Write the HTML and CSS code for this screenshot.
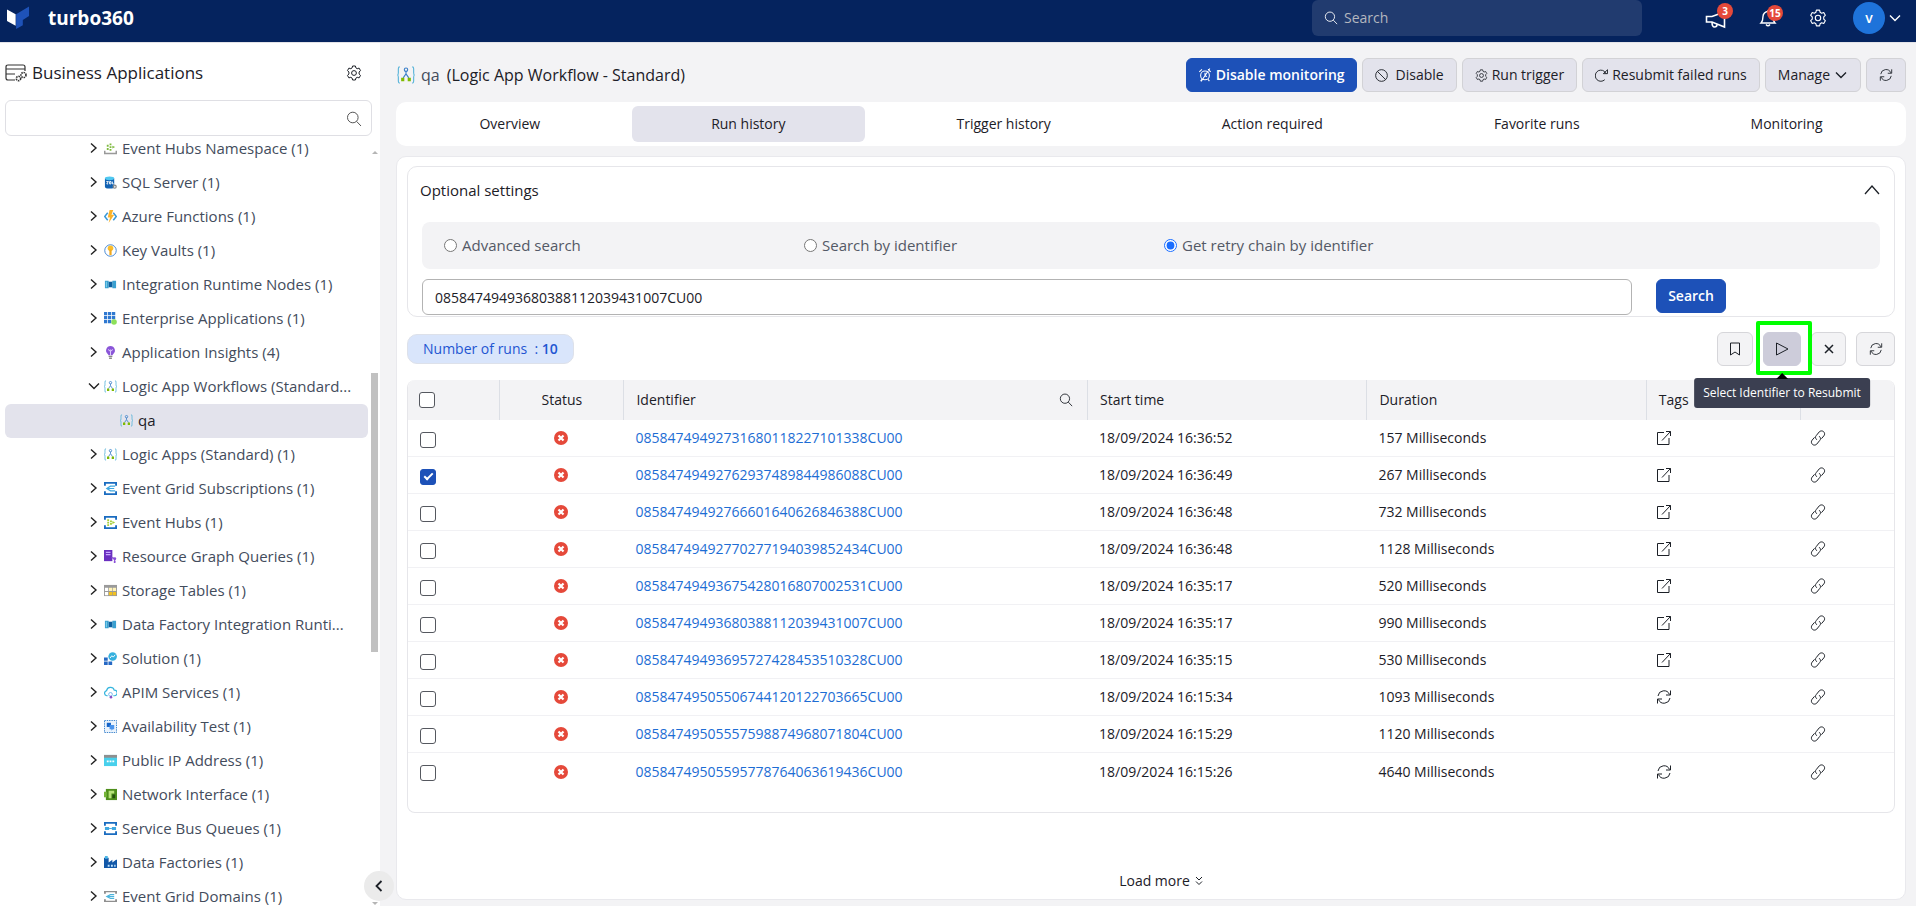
FILE: index.html
```html
<!DOCTYPE html>
<html lang="en">
<head>
<meta charset="utf-8">
<meta name="viewport" content="width=device-width, initial-scale=1">
<title>turbo360 - Run history</title>
<link rel="stylesheet" href="styles.css">
</head>
<body>
<svg class="sprite" aria-hidden="true">
  <symbol id="chev-right" viewBox="0 0 14 14"><path d="M4 2.5 9 7l-5 4.500" fill="none" stroke="currentColor" stroke-width="1.400"/></symbol>
  <symbol id="chev-down" viewBox="0 0 14 14"><path d="M2 4.500 7 9.500l5-5" fill="none" stroke="currentColor" stroke-width="1.400"/></symbol>
  <symbol id="gear" viewBox="0 0 16 16"><g fill="none" stroke="currentColor"><circle cx="8" cy="8" r="2.400"/><path d="M6.600 1h2.800l.5 1.900 1.300.8 1.900-.6 1.400 2.500-1.400 1.400v2l1.400 1.400-1.400 2.500-1.900-.6-1.300.8-.5 1.900H6.600l-.5-1.900-1.300-.8-1.900.6-1.400-2.500L2.900 9V7L1.500 5.600l1.400-2.500 1.900.6 1.300-.8z" stroke-linejoin="round"/></g></symbol>
  <symbol id="search" viewBox="0 0 16 16"><g fill="none" stroke="currentColor"><circle cx="6.800" cy="6.500" r="5.300"/><path d="M10.600 10.400 15 15"/></g></symbol>
  <symbol id="refresh" viewBox="0 0 16 16"><g fill="none" stroke="currentColor"><path d="M2 7a6 6 0 0 1 11.500-1.500M14 9a6 6 0 0 1-11.500 1.500"/><path d="M14.500 1.500V6H10M1.500 14.500V10H6"/></g></symbol>
  <symbol id="open" viewBox="0 0 16 16"><path d="M8 2.500H1.500v12H13V8M6 10.500 14.500 1.500M10 1.500h4.500V6" fill="none" stroke="currentColor" stroke-linejoin="round"/></symbol>
  <symbol id="link" viewBox="0 0 16 16"><g fill="none" stroke="currentColor" stroke-linecap="round"><path d="M6.500 9.500C5 8 5.300 6.500 6.300 5.500l3-3.700c1-1 2.900-1.300 4.200-.2 1.300 1.200 1.500 3 .4 4.200l-2.200 2.600"/><path d="M9.500 6.500c1.500 1.500 1.200 3 .2 4l-3 3.700c-1 1-2.900 1.300-4.200.2-1.300-1.200-1.500-3-.4-4.200l2.200-2.600"/></g></symbol>
  <symbol id="fail" viewBox="0 0 14 14"><circle cx="7" cy="7" r="7" fill="#e5493a"/><path d="m4.500 4.500 5 5m0-5-5 5" stroke="#fff" stroke-width="2.200"/></symbol>
  <symbol id="logic" viewBox="0 0 16 16"><g fill="none" stroke="#59b4d9"><path d="M2.500.8Q1.200.8 1.200 2.500v3.500Q1.200 8 .3 8q.9 0 .9 2v3.500q0 1.700 1.300 1.700M13.500.8q1.300 0 1.300 1.700v3.500q0 2 .9 2-.9 0-.9 2v3.500q0 1.700-1.300 1.700"/></g><path d="M8 4.500v2.500L5.500 10.500M8 7l2.500 3.500" stroke="#3a7fc8" fill="none"/><circle cx="8" cy="3.300" r="1.500" fill="none" stroke="#3a7fc8"/><path d="M3.700 10.500h2.800v3H3.700zM9.500 10.500h2.800v3H9.500z" fill="#7fba00"/></symbol>
  <symbol id="i-ehn" viewBox="0 0 14 14"><path d="M.8 9.500v3h12.400v-3" fill="none" stroke="#999" stroke-width="1.600"/><path d="M3 3h2v2H3zM3 6.500h2v2H3zM6 4.500h2v2H6zM6 1.500h2v2H6zM6 7.500h2v2H6zM9 4l3 1.500L9 7z" fill="#7fba3f"/></symbol>
  <symbol id="i-sql" viewBox="0 0 14 14"><path d="M1 2.500h10v9q0 2-5 2t-5-2z" fill="#1262b3"/><ellipse cx="6" cy="2.500" rx="5" ry="2" fill="#50c8f0"/><path d="M2.500 6h2.200L3 8.500h1.500M6 6h1.500v2.500H6zM9 6v2.500h1.500" stroke="#fff" fill="none"/><circle cx="11.500" cy="11.500" r="1.600" fill="none" stroke="#888" stroke-width="1.400"/></symbol>
  <symbol id="i-fn" viewBox="0 0 14 14"><path d="M4 3 .8 7 4 11M10 3l3.200 4L10 11" fill="none" stroke="#3999d8" stroke-width="1.600"/><path d="M6 0h4L8 5h3l-6 9 1.500-6H4z" fill="#fbb32b"/></symbol>
  <symbol id="i-key" viewBox="0 0 14 14"><circle cx="7" cy="7" r="6.200" fill="#fff" stroke="#3d82cf"/><circle cx="7" cy="4.500" r="3" fill="#fbbd2b"/><path d="M5.800 6h2.400v5L7 12.500 5.800 11z" fill="#f0a81e"/></symbol>
  <symbol id="i-node" viewBox="0 0 14 14"><path d="M1 3h4v8H1zM9 3h4v8H9z" fill="#3aa0d0"/><path d="M5 4h4v6H5z" fill="#0c5f9e"/><path d="M2 4h1v6H2z" fill="#8bd6f0"/></symbol>
  <symbol id="i-ent" viewBox="0 0 14 14"><path d="M0 0h3.500v3.500H0zM4.300 0h3.500v3.500H4.300zM8.600 0h3.500v3.500H8.600zM0 4.300h3.500v3.500H0zM4.300 4.300h3.500v3.500H4.300zM8.600 4.300h3.500v3.500H8.600zM0 8.600h3.500v3.500H0zM4.300 8.600h3.500v3.500H4.300z" fill="#2f78d0"/><circle cx="10.800" cy="10.700" r="3" fill="#8de05a"/></symbol>
  <symbol id="i-ins" viewBox="0 0 14 14"><path d="M7 0a4.800 4.800 0 0 1 3 8.500L9 10H5L4 8.500A4.800 4.800 0 0 1 7 0z" fill="#8a55d8"/><path d="M5 10.600h4v1.200H5zM5.500 12.500h3V14h-3z" fill="#888"/><path d="M4.800 3.500 6 5.500 7 4l1 1.500 1.200-2M7 5v5" stroke="#e4d4ff" fill="none"/></symbol>
  <symbol id="i-grid" viewBox="0 0 14 14"><path d="M0 0h14v4h-2V2H2v2H0zM0 14h14v-4h-2v2H2v-2H0z" fill="#1a6cc0"/><path d="M12 4.500H7L3 7l4 2.500h5M3 7h8" stroke="#3fa7e0" stroke-width="1.300" fill="none"/></symbol>
  <symbol id="i-hub" viewBox="0 0 14 14"><path d="M0 0h14v4h-2V2H2v2H0zM0 14h14v-4h-2v2H2v-2H0z" fill="#1a6cc0"/><path d="M3.500 3.500h2v2h-2zM3.500 6.200h2v2h-2zM3.500 8.900h2v2h-2zM6.500 4.800h2v2h-2zM6.500 7.500h2v2h-2zM9 5.500 12 7 9 8.500z" fill="#a6cf3a"/></symbol>
  <symbol id="i-graph" viewBox="0 0 14 14"><path d="M0 0h9v12H0z" fill="#6a2fc0"/><path d="M2 2.500h5M2 5h5" stroke="#c9a8ff" stroke-width="1.200"/><path d="m8 8 3.500 1.500L13 9m-1.500.5V13" stroke="#8a50d8" stroke-width="1.200"/><circle cx="11.500" cy="9.500" r="1.600" fill="#8a50d8"/><circle cx="11.500" cy="13" r="1.100" fill="#8a50d8"/></symbol>
  <symbol id="i-table" viewBox="0 0 14 14"><path d="M0 1h14v12H0z" fill="#9a9a9a"/><path d="M1 4h3.500v3.500H1zM1 8.500h3.500V12H1z" fill="#fff"/><path d="M5.300 4H9v3.500H5.300zM9.700 4H13v3.500H9.700z" fill="#fff3b8"/><path d="M5.300 8.500H9V12H5.300zM9.700 8.500H13V12H9.700z" fill="#f2c01e"/></symbol>
  <symbol id="i-sol" viewBox="0 0 14 14"><circle cx="9.300" cy="4.800" r="4.600" fill="#35b0de"/><path d="M6.500 6.500 8.500 4l1.500 1.500L12 3" stroke="#fff" fill="none"/><path d="M0 6h4v3.500H0zM0 10.300h4V14H0zM4.800 10.300h4V14h-4z" fill="#2769c4"/></symbol>
  <symbol id="i-api" viewBox="0 0 14 14"><path d="M4 10.500H3A2.800 2.800 0 0 1 2.800 5 4.200 4.200 0 0 1 11 4.500a3 3 0 0 1 .3 6H10" fill="none" stroke="#35b5de" stroke-width="1.300"/><circle cx="7" cy="9" r="2" fill="none" stroke="#6db6ee"/><circle cx="7.500" cy="12" r="1.400" fill="#8a50c8"/></symbol>
  <symbol id="i-avail" viewBox="0 0 14 14"><path d="M.5.500h13v13H.5z" fill="#eaf3fc" stroke="#2a78c8" stroke-dasharray="1.500 1"/><path d="M3 3h4.500v4.500H3z" fill="#1464c8"/><path d="M6 5.500h5V10H9.500L8 11.500V10H6z" fill="#4a94ec"/></symbol>
  <symbol id="i-ip" viewBox="0 0 14 14"><path d="M0 1h14v12H0z" fill="#48d0ec"/><path d="M0 1h14v3H0z" fill="#8f8f8f"/><path d="M3 8h2M6 8h2M9 8h2" stroke="#fff" stroke-width="2"/></symbol>
  <symbol id="i-nic" viewBox="0 0 14 14"><path d="M2 1h12v12H2z" fill="#4f8f1c"/><path d="M0 4h3v6H0z" fill="#76b53a"/><path d="M5 3h6v3H8v5H5z" fill="#b7e27a"/><path d="M9 7h3v4H9z" fill="#24500c"/></symbol>
  <symbol id="i-bus" viewBox="0 0 14 14"><path d="M0 0h14v4h-2V2H2v2H0zM0 14h14v-4h-2v2H2v-2H0z" fill="#1a6cc0"/><path d="M1 5.500h4.500v3H1zM8.500 5.500H13v3H8.500z" fill="#3fa7e0"/><path d="M5.500 7h3" stroke="#3fa7e0"/></symbol>
  <symbol id="i-fac" viewBox="0 0 14 14"><path d="M0 2h5v5l4-3v3l4-3h1v9H0z" fill="#1258a8"/><path d="M1 0h3v3H1z" fill="#49b6e6"/><path d="M4 9.500h2v2H4zM7.500 9.500h2v2h-2zM11 9.500h1.500v2H11z" fill="#bfe4ff"/></symbol>
  <symbol id="i-dom" viewBox="0 0 14 14"><path d="M0 1h14v3h-2V2.500H2V4H0zM0 13h14v-3h-2v1.500H2V10H0z" fill="#8f8f8f"/><path d="M11 5H7L3 7l4 2h4M3 7h8" stroke="#4cb4dc" stroke-width="1.200" fill="none"/></symbol>
</svg>

<header class="topbar">
  <a class="brand" href="#">
    <svg class="brand-mark" viewBox="0 0 24 24"><path d="M0 3 9 8v12L0 15z" fill="#fff"/><path d="M9.500 8 23 0v10l-6.500 4v5.500l-7 4z" fill="#1e52b8"/></svg>
    <span>turbo360</span>
  </a>
  <label class="global-search"><svg class="ic14"><use href="#search"/></svg><input type="search" placeholder="Search" aria-label="Search"></label>
  <nav class="top-actions">
    <button class="top-btn" aria-label="Announcements"><svg class="ic22" viewBox="0 0 22 22" fill="none" stroke="currentColor" stroke-width="1.600"><path d="M1.500 9.500H7L19.500 5v15L7 15H1.500zM7 15q0 5 2.500 5t2.500-2.500"/></svg><span class="badge">3</span></button>
    <button class="top-btn" aria-label="Notifications"><svg class="ic18" viewBox="0 0 18 18" fill="none" stroke="currentColor" stroke-width="1.400"><path d="M2 14Q4 12 4 7.500a5 5 0 0 1 10 0Q14 12 16 14zM9 1v1.500M7 15.500q2 2.500 4 0"/></svg><span class="badge">15</span></button>
    <button class="top-btn" aria-label="Settings"><svg class="ic18"><use href="#gear"/></svg></button>
    <button class="account" aria-label="Account"><span class="avatar">v</span><svg class="ic14"><use href="#chev-down"/></svg></button>
  </nav>
</header>

<div class="shell">
  <aside class="sidebar">
    <div class="side-head">
      <svg class="side-logo" viewBox="0 0 22 18" fill="none" stroke="#333" stroke-width="1.200"><path d="M10 16H3q-2 0-2-2V3q0-2 2-2h15q2 0 2 2v4M1 5h19M1 10h9"/><circle cx="13.500" cy="14.500" r="2.200" stroke-dasharray="1.500 .8" stroke-width="1.600"/><circle cx="18.500" cy="11" r="2.500" stroke-dasharray="1.500 .8" stroke-width="1.600"/></svg>
      <h1>Business Applications</h1>
      <button class="plain" aria-label="Sidebar settings"><svg class="ic16"><use href="#gear"/></svg></button>
    </div>
    <label class="side-search"><input type="text" aria-label="Filter applications"><svg class="ic16"><use href="#search"/></svg></label>
    <div class="tree-wrap">
      <ul class="tree">
        <li><svg class="ic14"><use href="#chev-right"/></svg><svg class="ic13"><use href="#i-ehn"/></svg>Event Hubs Namespace (1)</li>
        <li><svg class="ic14"><use href="#chev-right"/></svg><svg class="ic13"><use href="#i-sql"/></svg>SQL Server (1)</li>
        <li><svg class="ic14"><use href="#chev-right"/></svg><svg class="ic13"><use href="#i-fn"/></svg>Azure Functions (1)</li>
        <li><svg class="ic14"><use href="#chev-right"/></svg><svg class="ic13"><use href="#i-key"/></svg>Key Vaults (1)</li>
        <li><svg class="ic14"><use href="#chev-right"/></svg><svg class="ic13"><use href="#i-node"/></svg>Integration Runtime Nodes (1)</li>
        <li><svg class="ic14"><use href="#chev-right"/></svg><svg class="ic13"><use href="#i-ent"/></svg>Enterprise Applications (1)</li>
        <li><svg class="ic14"><use href="#chev-right"/></svg><svg class="ic13"><use href="#i-ins"/></svg>Application Insights (4)</li>
        <li><svg class="ic14"><use href="#chev-down"/></svg><svg class="ic13"><use href="#logic"/></svg>Logic App Workflows (Standard...</li>
        <li class="leaf"><svg class="ic13"><use href="#logic"/></svg>qa</li>
        <li><svg class="ic14"><use href="#chev-right"/></svg><svg class="ic13"><use href="#logic"/></svg>Logic Apps (Standard) (1)</li>
        <li><svg class="ic14"><use href="#chev-right"/></svg><svg class="ic13"><use href="#i-grid"/></svg>Event Grid Subscriptions (1)</li>
        <li><svg class="ic14"><use href="#chev-right"/></svg><svg class="ic13"><use href="#i-hub"/></svg>Event Hubs (1)</li>
        <li><svg class="ic14"><use href="#chev-right"/></svg><svg class="ic13"><use href="#i-graph"/></svg>Resource Graph Queries (1)</li>
        <li><svg class="ic14"><use href="#chev-right"/></svg><svg class="ic13"><use href="#i-table"/></svg>Storage Tables (1)</li>
        <li><svg class="ic14"><use href="#chev-right"/></svg><svg class="ic13"><use href="#i-node"/></svg>Data Factory Integration Runti...</li>
        <li><svg class="ic14"><use href="#chev-right"/></svg><svg class="ic13"><use href="#i-sol"/></svg>Solution (1)</li>
        <li><svg class="ic14"><use href="#chev-right"/></svg><svg class="ic13"><use href="#i-api"/></svg>APIM Services (1)</li>
        <li><svg class="ic14"><use href="#chev-right"/></svg><svg class="ic13"><use href="#i-avail"/></svg>Availability Test (1)</li>
        <li><svg class="ic14"><use href="#chev-right"/></svg><svg class="ic13"><use href="#i-ip"/></svg>Public IP Address (1)</li>
        <li><svg class="ic14"><use href="#chev-right"/></svg><svg class="ic13"><use href="#i-nic"/></svg>Network Interface (1)</li>
        <li><svg class="ic14"><use href="#chev-right"/></svg><svg class="ic13"><use href="#i-bus"/></svg>Service Bus Queues (1)</li>
        <li><svg class="ic14"><use href="#chev-right"/></svg><svg class="ic13"><use href="#i-fac"/></svg>Data Factories (1)</li>
        <li><svg class="ic14"><use href="#chev-right"/></svg><svg class="ic13"><use href="#i-dom"/></svg>Event Grid Domains (1)</li>
      </ul>
      <div class="scrollbar" aria-hidden="true"><i class="arrow-up"></i><i class="thumb"></i><i class="arrow-down"></i></div>
    </div>
    <button class="collapse" aria-label="Collapse sidebar"><svg class="ic14" viewBox="0 0 14 14"><path d="M9.500 2 4.500 7l5 5" fill="none" stroke="currentColor" stroke-width="1.800"/></svg></button>
  </aside>

  <main class="main">
    <div class="title-row">
      <svg class="title-icon"><use href="#logic"/></svg>
      <span class="res-name">qa</span>
      <h2>(Logic App Workflow - Standard)</h2>
      <div class="actions">
        <button class="btn primary"><svg class="ic14" viewBox="0 0 16 16" fill="none" stroke="currentColor" stroke-width="1.200"><circle cx="8" cy="8.500" r="5"/><path d="M8 5.500v3l2 1.500M1.500 4.500l3-3M11.500 1.500l3 3M4.500 13 3 15M11.500 13l1.500 2M3.500 15.500 13.500.5"/></svg>Disable monitoring</button>
        <button class="btn wide"><svg class="ic13" viewBox="0 0 14 14" fill="none" stroke="currentColor"><circle cx="7" cy="7" r="6.300"/><path d="m2.500 2.500 9 9"/></svg>Disable</button>
        <button class="btn"><svg class="ic13"><use href="#gear"/></svg>Run trigger</button>
        <button class="btn"><svg class="ic13" viewBox="0 0 14 14" fill="none" stroke="currentColor"><path d="M10.500 11.500A6 6 0 1 1 10 2.500L12 5M13.500.8V5H9z"/></svg>Resubmit failed runs</button>
        <button class="btn">Manage<svg class="ic14"><use href="#chev-down"/></svg></button>
        <button class="btn" aria-label="Refresh"><svg class="ic14"><use href="#refresh"/></svg></button>
      </div>
    </div>

    <nav class="tabs">
      <a href="#">Overview</a><a href="#" class="active">Run history</a><a href="#">Trigger history</a><a href="#">Action required</a><a href="#">Favorite runs</a><a href="#">Monitoring</a>
    </nav>

    <section class="panel">
      <section class="card">
        <div class="card-head"><h3>Optional settings</h3><button class="plain" aria-label="Collapse settings"><svg class="ic16" viewBox="0 0 16 16"><path d="M1 12l7-8 7 8" fill="none" stroke="currentColor" stroke-width="1.300"/></svg></button></div>
        <div class="modes">
          <label><input type="radio" name="mode">Advanced search</label>
          <label><input type="radio" name="mode">Search by identifier</label>
          <label><input type="radio" name="mode" checked>Get retry chain by identifier</label>
        </div>
        <div class="query"><input type="text" value="08584749493680388112039431007CU00" aria-label="Identifier"><button class="btn primary">Search</button></div>
      </section>

      <div class="toolbar">
        <span class="chip">Number of runs &nbsp;: <b>10</b></span>
        <div class="tools">
          <button class="tool" aria-label="Bookmark"><svg class="ic14" viewBox="0 0 14 14"><path d="M2.500 1h9v12L7 10l-4.500 3z" fill="none" stroke="currentColor"/></svg></button>
          <span class="focus-tool">
            <button class="tool pressed" aria-label="Resubmit" aria-describedby="resubmit-tip"><svg class="ic14" viewBox="0 0 14 14"><path d="M1.500 1v12L13 7z" fill="none" stroke="currentColor" stroke-linejoin="round"/></svg></button>
            <span class="highlight"></span>
            <span class="tooltip" role="tooltip" id="resubmit-tip">Select Identifier to Resubmit</span>
          </span>
          <button class="tool slim" aria-label="Clear selection"><svg class="ic14" viewBox="0 0 14 14"><path d="m3 3 8 8m0-8-8 8" stroke="currentColor" stroke-width="1.500"/></svg></button>
          <button class="tool last" aria-label="Refresh runs"><svg class="ic14"><use href="#refresh"/></svg></button>
        </div>
      </div>

      <div class="table-wrap">
        <table>
          <colgroup><col class="c-check"><col class="c-status"><col class="c-id"><col class="c-start"><col class="c-dur"><col class="c-tags"><col></colgroup>
          <thead><tr><th><input type="checkbox" aria-label="Select all"></th><th class="mid">Status</th><th><div class="id-head">Identifier<svg class="ic14"><use href="#search"/></svg></div></th><th>Start time</th><th>Duration</th><th>Tags</th><th></th></tr></thead>
          <tbody>
            <tr><td><input type="checkbox" aria-label="Select run"></td><td class="mid"><svg class="ic14"><use href="#fail"/></svg></td><td><a href="#">08584749492731680118227101338CU00</a></td><td>18/09/2024 16:36:52</td><td>157 Milliseconds</td><td class="act"><svg class="ic16"><use href="#open"/></svg></td><td class="act"><svg class="ic16"><use href="#link"/></svg></td></tr>
            <tr><td><input type="checkbox" aria-label="Select run" checked></td><td class="mid"><svg class="ic14"><use href="#fail"/></svg></td><td><a href="#">08584749492762937489844986088CU00</a></td><td>18/09/2024 16:36:49</td><td>267 Milliseconds</td><td class="act"><svg class="ic16"><use href="#open"/></svg></td><td class="act"><svg class="ic16"><use href="#link"/></svg></td></tr>
            <tr><td><input type="checkbox" aria-label="Select run"></td><td class="mid"><svg class="ic14"><use href="#fail"/></svg></td><td><a href="#">08584749492766601640626846388CU00</a></td><td>18/09/2024 16:36:48</td><td>732 Milliseconds</td><td class="act"><svg class="ic16"><use href="#open"/></svg></td><td class="act"><svg class="ic16"><use href="#link"/></svg></td></tr>
            <tr><td><input type="checkbox" aria-label="Select run"></td><td class="mid"><svg class="ic14"><use href="#fail"/></svg></td><td><a href="#">08584749492770277194039852434CU00</a></td><td>18/09/2024 16:36:48</td><td>1128 Milliseconds</td><td class="act"><svg class="ic16"><use href="#open"/></svg></td><td class="act"><svg class="ic16"><use href="#link"/></svg></td></tr>
            <tr><td><input type="checkbox" aria-label="Select run"></td><td class="mid"><svg class="ic14"><use href="#fail"/></svg></td><td><a href="#">08584749493675428016807002531CU00</a></td><td>18/09/2024 16:35:17</td><td>520 Milliseconds</td><td class="act"><svg class="ic16"><use href="#open"/></svg></td><td class="act"><svg class="ic16"><use href="#link"/></svg></td></tr>
            <tr><td><input type="checkbox" aria-label="Select run"></td><td class="mid"><svg class="ic14"><use href="#fail"/></svg></td><td><a href="#">08584749493680388112039431007CU00</a></td><td>18/09/2024 16:35:17</td><td>990 Milliseconds</td><td class="act"><svg class="ic16"><use href="#open"/></svg></td><td class="act"><svg class="ic16"><use href="#link"/></svg></td></tr>
            <tr><td><input type="checkbox" aria-label="Select run"></td><td class="mid"><svg class="ic14"><use href="#fail"/></svg></td><td><a href="#">08584749493695727428453510328CU00</a></td><td>18/09/2024 16:35:15</td><td>530 Milliseconds</td><td class="act"><svg class="ic16"><use href="#open"/></svg></td><td class="act"><svg class="ic16"><use href="#link"/></svg></td></tr>
            <tr><td><input type="checkbox" aria-label="Select run"></td><td class="mid"><svg class="ic14"><use href="#fail"/></svg></td><td><a href="#">08584749505506744120122703665CU00</a></td><td>18/09/2024 16:15:34</td><td>1093 Milliseconds</td><td class="act"><svg class="ic16"><use href="#refresh"/></svg></td><td class="act"><svg class="ic16"><use href="#link"/></svg></td></tr>
            <tr><td><input type="checkbox" aria-label="Select run"></td><td class="mid"><svg class="ic14"><use href="#fail"/></svg></td><td><a href="#">08584749505557598874968071804CU00</a></td><td>18/09/2024 16:15:29</td><td>1120 Milliseconds</td><td></td><td class="act"><svg class="ic16"><use href="#link"/></svg></td></tr>
            <tr><td><input type="checkbox" aria-label="Select run"></td><td class="mid"><svg class="ic14"><use href="#fail"/></svg></td><td><a href="#">08584749505595778764063619436CU00</a></td><td>18/09/2024 16:15:26</td><td>4640 Milliseconds</td><td class="act"><svg class="ic16"><use href="#refresh"/></svg></td><td class="act"><svg class="ic16"><use href="#link"/></svg></td></tr>
          </tbody>
        </table>
      </div>

      <button class="load-more">Load more<svg class="ic8" viewBox="0 0 8 10"><path d="m1 1 3 3 3-3M1 5.500l3 3 3-3" fill="none" stroke="currentColor"/></svg></button>
    </section>
  </main>
</div>
</body>
</html>
```
FILE: styles.css
```css
*, *::before, *::after { box-sizing: border-box; }

body {
  margin: 0;
  height: 100vh;
  display: flex;
  flex-direction: column;
  overflow: hidden;
  font: 14px/20px "Open Sans", sans-serif;
  color: #1c2027;
  background: #f3f3f5;
}

h1, h2, h3, ul { margin: 0; padding: 0; font-weight: 400; }
button, input { font: inherit; color: inherit; margin: 0; }
button { cursor: pointer; }
a { color: inherit; text-decoration: none; }
svg { display: block; flex: none; }

.sprite { position: absolute; width: 0; height: 0; }
.ic8 { width: 8px; height: 10px; }
.ic13 { width: 13px; height: 13px; }
.ic14 { width: 14px; height: 14px; }
.ic16 { width: 16px; height: 16px; }
.ic18 { width: 18px; height: 18px; }
.ic22 { width: 22px; height: 22px; }
.plain { padding: 0; border: 0; background: none; }

/* Top bar */
.topbar {
  flex: none;
  height: 42px;
  padding: 0 14px 6px 7px;
  display: flex;
  align-items: center;
  color: #fff;
  background: #05235e;
}
.brand { display: flex; align-items: center; gap: 18px; font-size: 19px; font-weight: 700; }
.brand-mark { width: 23px; height: 24px; }
.global-search {
  margin-left: auto;
  width: 330px;
  height: 36px;
  padding: 0 12px;
  display: flex;
  align-items: center;
  gap: 6px;
  border-radius: 6px;
  background: #213b6f;
}
.global-search input { flex: 1; min-width: 0; padding: 0; border: 0; outline: 0; background: none; }
.global-search input::placeholder { color: #b4b7bf; opacity: 1; }
.top-actions { margin-left: 63px; display: flex; align-items: center; }
.top-btn { position: relative; padding: 0; border: 0; background: none; margin-right: 32px; }
.top-btn:nth-child(3) { margin-right: 26px; }
.badge {
  position: absolute;
  top: -4px;
  right: -6px;
  min-width: 16px;
  height: 16px;
  padding: 0 2px;
  border-radius: 8px;
  font-size: 10px;
  line-height: 16px;
  font-weight: 700;
  background: #e5493a;
}
.account { display: flex; align-items: center; gap: 3px; padding: 0; border: 0; background: none; }
.avatar { width: 32px; height: 32px; border-radius: 50%; line-height: 32px; font-weight: 600; background: #1e73da; }

.shell { flex: 1; min-height: 0; display: flex; border-top: 1px solid #e3e3e8; }

/* Sidebar */
.sidebar {
  position: relative;
  flex: none;
  width: 380px;
  padding: 15px 2px 0 5px;
  display: flex;
  flex-direction: column;
  background: #fff;
}
.side-head { height: 30px; display: flex; align-items: center; gap: 5px; padding-right: 16px; }
.side-head h1 { flex: 1; font-size: 17px; }
.side-logo { width: 22px; height: 18px; }
.side-search {
  flex: none;
  height: 36px;
  margin: 12px 6px 2px 0;
  padding: 2px 9px 0 10px;
  display: flex;
  align-items: center;
  border: 1px solid #dfdfe4;
  border-radius: 6px;
  color: #555;
}
.side-search input { flex: 1; min-width: 0; border: 0; outline: 0; background: none; }
.tree-wrap { flex: 1; min-height: 0; display: flex; overflow: hidden; }
.tree { flex: 1; margin-top: -6px; list-style: none; font-size: 15px; color: #434c5c; }
.tree li { height: 34px; padding: 0 0 2px 82px; display: flex; align-items: center; white-space: nowrap; border-radius: 6px; }
.tree .ic14 { margin-right: 3px; color: #222; }
.tree .ic13 { margin-right: 5px; }
.tree .leaf { padding-left: 115px; color: #1c2027; background: #e3e3ec; }
.scrollbar { width: 7px; margin: 13px 0 0 3px; display: flex; flex-direction: column; align-items: center; }
.arrow-up { border: 3px solid transparent; border-top: 0; border-bottom-color: #b5b5b5; }
.arrow-down { margin: auto 0 1px; border: 3px solid transparent; border-bottom: 0; border-top-color: #b5b5b5; }
.thumb { width: 7px; height: 37%; margin-top: 219px; background: #c1c1c1; }
.collapse {
  position: absolute;
  right: -14px;
  bottom: 5px;
  width: 30px;
  height: 30px;
  padding: 8px;
  border: 0;
  border-radius: 50%;
  background: #ebebeb;
}

/* Main area */
.main { flex: 1; min-width: 0; padding: 15px 10px 6px 16px; display: flex; flex-direction: column; gap: 10px; }
.title-row { display: flex; align-items: center; }
.title-icon { width: 20px; height: 18px; }
.res-name { margin: 0 7px 0 5px; font-size: 16px; color: #434c5c; }
.title-row h2 { font-size: 16px; }
.actions { margin-left: auto; display: flex; gap: 5px; }
.btn {
  height: 34px;
  padding: 0 12px;
  display: flex;
  align-items: center;
  gap: 4px;
  white-space: nowrap;
  border: 1px solid #d2d2d6;
  border-radius: 6px;
  background: #e3e3ec;
}
.btn.wide { gap: 8px; }
.btn.primary { padding: 0 11px; font-weight: 600; color: #fff; border-color: #1d51b8; background: #1d51b8; }

.tabs { display: flex; gap: 12px; padding: 4px; border-radius: 10px; background: #fff; }
.tabs a { flex: 1 1 auto; height: 36px; line-height: 36px; text-align: center; border-radius: 6px; }
.tabs .active { background: #e3e3ec; }

.panel {
  flex: 1;
  min-height: 0;
  padding: 9px 10px 8px;
  display: flex;
  flex-direction: column;
  border: 1px solid #e9e9ed;
  border-radius: 10px;
  background: #fff;
}
.card { padding: 0 14px 1px; border: 1px solid #e6e6ea; border-radius: 10px; }
.card-head { height: 46px; display: flex; align-items: center; justify-content: space-between; }
.card-head h3 { font-size: 15px; margin-left: -2px; }
.modes { display: flex; margin-top: 9px; padding: 0 22px; border-radius: 8px; font-size: 15px; line-height: 47px; color: #535966; background: #f3f3f5; }
.modes label { width: 360px; display: flex; align-items: center; gap: 5px; }
.modes input { width: 13px; height: 13px; accent-color: #1a6dff; }
.query { display: flex; gap: 24px; margin-top: 10px; }
.query input { width: 83%; height: 36px; padding: 0 12px; border: 1px solid #b3b3b3; border-radius: 6px; outline: 0; }

.toolbar { display: flex; align-items: center; justify-content: space-between; margin: 15px 0 14px; }
.chip { padding: 4px 15px; border: 1px solid #dde1ea; border-radius: 10px; color: #1f56d2; background: #d9e5fb; }
.chip b { font-weight: 600; }
.tools { display: flex; gap: 10px; }
.tool {
  width: 36px;
  height: 34px;
  padding: 0;
  display: flex;
  align-items: center;
  justify-content: center;
  border: 1px solid #d6d6da;
  border-radius: 6px;
  background: #f3f3f5;
}
.tool.pressed { width: 38px; border-color: #cdccda; background: #cdccda; }
.tool.slim { width: 35px; }
.tool.last { width: 39px; }
.focus-tool { position: relative; }
.highlight { position: absolute; inset: -11px -11px -9px -7px; border: 4px solid #00ff00; border-radius: 2px; pointer-events: none; }
.tooltip {
  position: absolute;
  z-index: 2;
  top: 46px;
  left: 50%;
  transform: translateX(-50%);
  padding: 5px 9px;
  white-space: nowrap;
  font-size: 12px;
  color: #fff;
  border-radius: 3px;
  background: #3b3f51;
}
.tooltip::before {
  content: "";
  position: absolute;
  top: -5px;
  left: 50%;
  margin-left: -6px;
  border: 6px solid transparent;
  border-top: 0;
  border-bottom-color: #000;
}

/* Runs table */
.table-wrap { padding-bottom: 22px; border: 1px solid #e6e6ea; border-top: 0; border-radius: 8px; overflow: hidden; }
table { width: 100%; table-layout: fixed; border-collapse: separate; border-spacing: 0; }
.c-check { width: 6.150%; }
.c-status { width: 8.350%; }
.c-id { width: 31.200%; }
.c-start { width: 18.800%; }
.c-dur { width: 18.800%; }
.c-tags { width: 10.400%; }
th { height: 40px; padding: 0 12px; text-align: left; font-weight: 400; background: #f3f3f5; }
th + th { border-left: 1px solid #dcdfe5; }
td { height: 37px; padding: 0 12px; border-bottom: 1px solid #f1f1f4; }
tr:last-child td { border-bottom: 0; }
th:first-child { padding-left: 11px; }
td:first-child { padding: 3px 0 0 12px; }
td.act { padding: 0 10px; }
td.mid, th.mid { text-align: center; padding: 0; }
.mid svg { margin: auto; }
td a { color: #1d6dd4; }
.id-head { display: flex; justify-content: space-between; align-items: center; padding-right: 2px; }
input[type="checkbox"] {
  display: block;
  appearance: none;
  width: 16px;
  height: 16px;
  border: 1px solid #55585f;
  border-radius: 3px;
  background: #fff;
}
input[type="checkbox"]:checked { position: relative; border-color: #1d51b8; background: #1d51b8; }
input[type="checkbox"]:checked::after {
  content: "";
  position: absolute;
  left: 5px;
  top: 1px;
  width: 5px;
  height: 9px;
  border: solid #fff;
  border-width: 0 2px 2px 0;
  transform: rotate(45deg);
}

.load-more { margin: auto auto 0; padding: 0 0 0 20px; display: flex; align-items: center; gap: 5px; border: 0; background: none; }
```
